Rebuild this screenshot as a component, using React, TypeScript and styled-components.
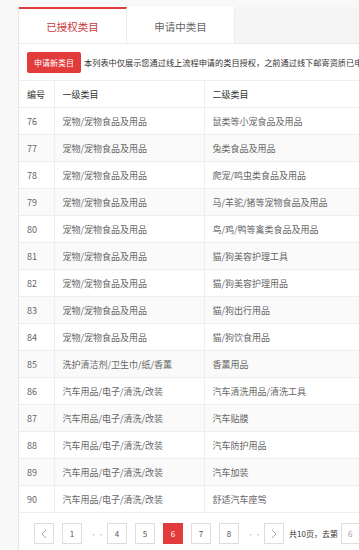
import styled, { createGlobalStyle } from "styled-components";

const GlobalStyle = createGlobalStyle`
  * {
    box-sizing: border-box;
  }
  body {
    margin: 0;
    background: #f9f9f9;
    font-family: "Noto Sans CJK SC", "Noto Sans", sans-serif;
    overflow: hidden;
  }
`;

const Page = styled.div`
  width: 359px;
  height: 550px;
  padding: 7px 0 0 18px;
  overflow: hidden;
`;

const Panel = styled.div`
  width: 620px;
  height: 560px;
  background: #fff;
  border-left: 1px solid #e6e6e6;
`;

const TabBar = styled.div`
  display: flex;
  height: 37px;
  background: #f5f5f5;
  border-bottom: 1px solid #ebebeb;
`;

const Tab = styled.div<{ $active?: boolean }>`
  width: 108px;
  display: flex;
  align-items: center;
  justify-content: center;
  background: #fff;
  border-top: 2px solid ${(p) => (p.$active ? "#e23c3c" : "transparent")};
  border-right: 1px solid #ebebeb;
  color: ${(p) => (p.$active ? "#c9383a" : "#666")};
  font-size: 10.5px;
`;

const Toolbar = styled.div`
  display: flex;
  align-items: center;
  gap: 3px;
  height: 36px;
  padding-left: 8px;
  white-space: nowrap;
  overflow: hidden;
`;

const ApplyButton = styled.button`
  height: 21px;
  padding: 0 7px;
  border: none;
  border-radius: 2px;
  background: #e13b3b;
  color: #fff;
  font-family: inherit;
  font-size: 8px;
`;

const Notice = styled.span`
  font-size: 8.2px;
  color: #333;
`;

const Table = styled.table`
  border-collapse: collapse;
  table-layout: fixed;
  width: 560px;
  font-size: 9px;
`;

const HeadCell = styled.th<{ $w: number }>`
  width: ${(p) => p.$w}px;
  height: 27px;
  padding: 0 0 0 8px;
  text-align: left;
  font-weight: normal;
  color: #333;
  border-top: 1px solid #eee;
  border-bottom: 1px solid #eee;
  border-right: 1px solid #eee;
`;

const Row = styled.tr<{ $alt: boolean }>`
  background: ${(p) => (p.$alt ? "#fafafa" : "#fff")};
`;

const Cell = styled.td`
  height: 27px;
  padding: 0 0 0 8px;
  color: #666;
  white-space: nowrap;
  border-bottom: 1px solid #eee;
  border-right: 1px solid #eee;
`;

const Pager = styled.div`
  display: flex;
  align-items: center;
  gap: 8px;
  padding: 10px 0 0 15px;
  white-space: nowrap;
`;

const PageBox = styled.div<{ $active?: boolean }>`
  width: 20px;
  height: 21px;
  display: flex;
  align-items: center;
  justify-content: center;
  border: 1px solid ${(p) => (p.$active ? "#e13b3b" : "#ddd")};
  background: ${(p) => (p.$active ? "#e13b3b" : "#fff")};
  color: ${(p) => (p.$active ? "#fff" : "#555")};
  font-size: 8px;
`;

const Dots = styled.span`
  width: 9px;
  color: #bbb;
  font-size: 7px;
  letter-spacing: 0.5px;
`;

const PageInfo = styled.span`
  margin-left: -3px;
  font-size: 8px;
  color: #333;
`;

const PageInput = styled.input`
  width: 34px;
  height: 21px;
  margin-left: -5px;
  border: 1px solid #ddd;
  padding: 0 6px;
  font-size: 8px;
  color: #999;
  font-family: inherit;
`;

const rows: [number, string, string][] = [
  [76, "宠物/宠物食品及用品", "鼠类等小宠食品及用品"],
  [77, "宠物/宠物食品及用品", "兔类食品及用品"],
  [78, "宠物/宠物食品及用品", "爬宠/鸣虫类食品及用品"],
  [79, "宠物/宠物食品及用品", "马/羊驼/猪等宠物食品及用品"],
  [80, "宠物/宠物食品及用品", "鸟/鸡/鸭等禽类食品及用品"],
  [81, "宠物/宠物食品及用品", "猫/狗美容护理工具"],
  [82, "宠物/宠物食品及用品", "猫/狗美容护理用品"],
  [83, "宠物/宠物食品及用品", "猫/狗出行用品"],
  [84, "宠物/宠物食品及用品", "猫/狗饮食用品"],
  [85, "洗护清洁剂/卫生巾/纸/香薰", "香薰用品"],
  [86, "汽车用品/电子/清洗/改装", "汽车清洗用品/清洗工具"],
  [87, "汽车用品/电子/清洗/改装", "汽车贴膜"],
  [88, "汽车用品/电子/清洗/改装", "汽车防护用品"],
  [89, "汽车用品/电子/清洗/改装", "汽车加装"],
  [90, "汽车用品/电子/清洗/改装", "舒适汽车座驾"],
];

function Chevron({ dir }: { dir: "left" | "right" }) {
  return (
    <svg width="6" height="10" viewBox="0 0 6 10">
      <polyline
        points={dir === "left" ? "5,1 1,5 5,9" : "1,1 5,5 1,9"}
        fill="none"
        stroke="#999"
        strokeWidth="0.9"
      />
    </svg>
  );
}

export default function App() {
  return (
    <Page>
      <GlobalStyle />
      <Panel>
        <TabBar>
          <Tab $active>已授权类目</Tab>
          <Tab>申请中类目</Tab>
        </TabBar>
        <Toolbar>
          <ApplyButton>申请新类目</ApplyButton>
          <Notice>
            本列表中仅展示您通过线上流程申请的类目授权，之前通过线下邮寄资质已申请的类目请联系客服查看
          </Notice>
        </Toolbar>
        <Table>
          <thead>
            <tr>
              <HeadCell $w={35}>编号</HeadCell>
              <HeadCell $w={150}>一级类目</HeadCell>
              <HeadCell $w={375}>二级类目</HeadCell>
            </tr>
          </thead>
          <tbody>
            {rows.map(([id, first, second], i) => (
              <Row key={id} $alt={i % 2 === 1}>
                <Cell>{id}</Cell>
                <Cell>{first}</Cell>
                <Cell>{second}</Cell>
              </Row>
            ))}
          </tbody>
        </Table>
        <Pager>
          <PageBox>
            <Chevron dir="left" />
          </PageBox>
          <PageBox>1</PageBox>
          <Dots>···</Dots>
          <PageBox>4</PageBox>
          <PageBox>5</PageBox>
          <PageBox $active>6</PageBox>
          <PageBox>7</PageBox>
          <PageBox>8</PageBox>
          <Dots>···</Dots>
          <PageBox>
            <Chevron dir="right" />
          </PageBox>
          <PageInfo>共10页，去第</PageInfo>
          <PageInput defaultValue="6" />
        </Pager>
      </Panel>
    </Page>
  );
}
